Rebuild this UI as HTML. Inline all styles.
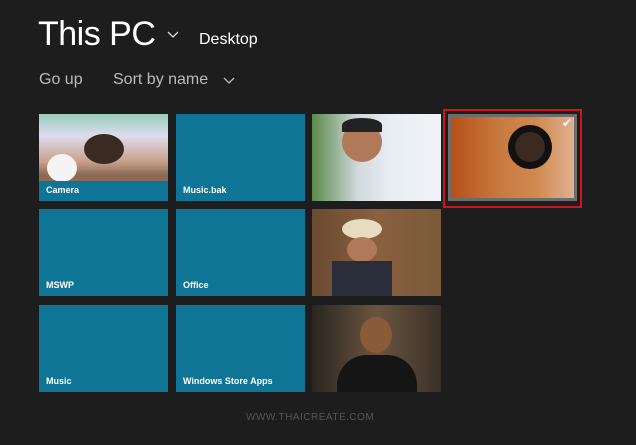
<html><head><style>
body{margin:0;width:636px;height:445px;background:#1d1d1d;position:relative;overflow:hidden;font-family:"Liberation Sans",sans-serif;color:#fff}
.a{position:absolute}
.t{position:absolute;width:129px;height:87px;background:#0e7597}
.l{position:absolute;left:7px;bottom:6px;font-size:9px;font-weight:bold}
</style></head><body>
<div class="a" style="left:38px;top:15px;font-size:34px;letter-spacing:-0.5px">This PC</div>
<svg class="a" style="left:167px;top:31px" width="12" height="8"><path d="M1 1L6 6L11 1" stroke="#ddd" fill="none" stroke-width="1.3"/></svg>
<div class="a" style="left:199px;top:31px;font-size:16px">Desktop</div>
<div class="a" style="left:39px;top:71px;font-size:16px;color:#bbb">Go up</div>
<div class="a" style="left:113px;top:71px;font-size:16px;color:#bbb">Sort by name</div>
<svg class="a" style="left:223px;top:77px" width="12" height="8"><path d="M1 1L6 6L11 1" stroke="#bbb" fill="none" stroke-width="1.3"/></svg>

<div class="t" style="left:39px;top:114px;background:linear-gradient(180deg,#9cb 0,#dde 25%,#c9a08a 55%,#8a6a55 70%);"><div class="a" style="left:8px;top:40px;width:30px;height:28px;border-radius:50%;background:#f4f4f4"></div><div class="a" style="left:45px;top:20px;width:40px;height:30px;border-radius:50%;background:#3a2a22"></div><div class="a" style="left:0;bottom:0;width:129px;height:20px;background:#0e7597"></div><span class="l">Camera</span></div>
<div class="t" style="left:176px;top:114px"><span class="l">Music.bak</span></div>
<div class="t" style="left:312px;top:114px;background:linear-gradient(90deg,#5a8a4a,#cfd8dc 35%,#e8eef3 60%,#f0f3f6)"><div class="a" style="left:30px;top:8px;width:40px;height:40px;border-radius:50%;background:#b07a5a"></div><div class="a" style="left:30px;top:4px;width:40px;height:14px;border-radius:50% 50% 0 0;background:#222"></div></div>
<div class="a" style="left:443px;top:109px;width:135px;height:95px;border:2px solid #d0161d;"></div>
<div class="a" style="left:448px;top:114px;width:129px;height:87px;background:#6d6d6d"><div class="a" style="left:3px;top:3px;width:123px;height:81px;background:linear-gradient(90deg,#b5501a,#c97a40 40%,#d08a50 70%,#e0b090)"><div class="a" style="left:57px;top:8px;width:44px;height:44px;border-radius:50%;background:#111"></div><div class="a" style="left:64px;top:15px;width:30px;height:30px;border-radius:50%;background:#3a2a20"></div></div><div class="a" style="right:5px;top:2px;font-size:12px;color:#fff">✔</div></div>
<div class="t" style="left:39px;top:209px"><span class="l">MSWP</span></div>
<div class="t" style="left:176px;top:209px"><span class="l">Office</span></div>
<div class="t" style="left:312px;top:209px;background:linear-gradient(90deg,#6a4a30,#8a6040 50%,#7a5a3a)"><div class="a" style="left:30px;top:10px;width:40px;height:20px;border-radius:50%;background:#e8dcc0"></div><div class="a" style="left:35px;top:28px;width:30px;height:25px;border-radius:50%;background:#b07a5a"></div><div class="a" style="left:20px;top:52px;width:60px;height:35px;background:#2a2e3a"></div></div>
<div class="t" style="left:39px;top:305px"><span class="l">Music</span></div>
<div class="t" style="left:176px;top:305px"><span class="l">Windows Store Apps</span></div>
<div class="t" style="left:312px;top:305px;background:linear-gradient(90deg,#2a2520,#6a5540 50%,#3a3028)"><div class="a" style="left:48px;top:12px;width:32px;height:36px;border-radius:50%;background:#8a5a3a"></div><div class="a" style="left:25px;top:50px;width:80px;height:37px;border-radius:30px 30px 0 0;background:#151515"></div></div>
<div class="a" style="left:246px;top:412px;font-size:10px;color:#555;letter-spacing:0.5px">WWW.THAICREATE.COM</div>
</body></html>
